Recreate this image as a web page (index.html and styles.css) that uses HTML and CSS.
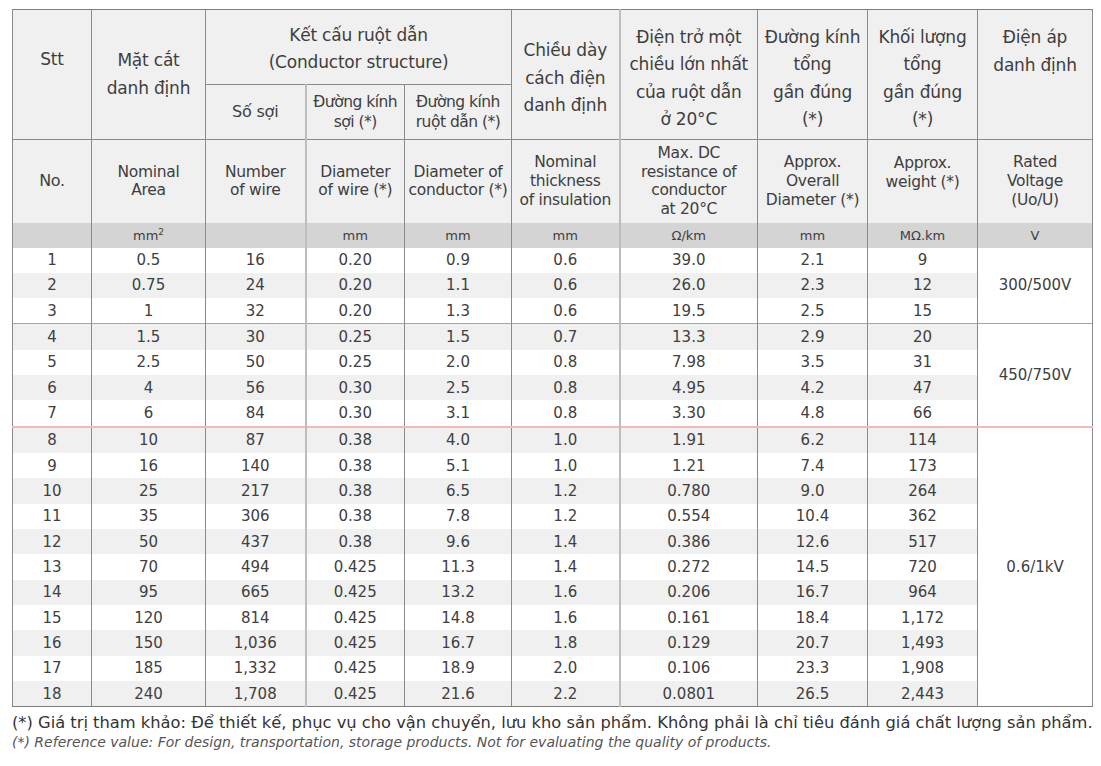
FILE: index.html
```html
<!DOCTYPE html>
<html lang="vi">
<head>
    <meta charset="UTF-8">
    <meta name="viewport" content="width=device-width, initial-scale=1.0">
    <title>Thông số kỹ thuật cáp</title>
    <link rel="stylesheet" href="styles.css">
</head>
<body>
    <table class="spec">
        <colgroup>
            <col class="c-no">
            <col class="c-area">
            <col class="c-wire">
            <col class="c-dwire">
            <col class="c-dcond">
            <col class="c-ins">
            <col class="c-res">
            <col class="c-od">
            <col class="c-wt">
            <col class="c-volt">
        </colgroup>
        <thead>
            <tr class="head-vi">
                <th rowspan="2" class="stt">Stt</th>
                <th rowspan="2">Mặt cắt<br>danh định</th>
                <th colspan="3" class="group">Kết cấu ruột dẫn<br>(Conductor structure)</th>
                <th rowspan="2" class="mid">Chiều dày<br>cách điện<br>danh định</th>
                <th rowspan="2" class="mid light-l">Điện trở một<br>chiều lớn nhất<br>của ruột dẫn<br>ở 20°C</th>
                <th rowspan="2" class="mid">Đường kính<br>tổng<br>gần đúng<br>(*)</th>
                <th rowspan="2" class="mid">Khối lượng<br>tổng<br>gần đúng<br>(*)</th>
                <th rowspan="2" class="top">Điện áp<br>danh định</th>
            </tr>
            <tr class="head-sub">
                <th class="big">Số sợi</th>
                <th class="light-l">Đường kính<br>sợi (*)</th>
                <th>Đường kính<br>ruột dẫn (*)</th>
            </tr>
            <tr class="head-en">
                <th class="big">No.</th>
                <th>Nominal<br>Area</th>
                <th>Number<br>of wire</th>
                <th class="light-l">Diameter<br>of wire (*)</th>
                <th>Diameter of<br>conductor (*)</th>
                <th>Nominal<br>thickness<br>of insulation</th>
                <th class="light-l">Max. DC<br>resistance of<br>conductor<br>at 20°C</th>
                <th>Approx.<br>Overall<br>Diameter (*)</th>
                <th class="top">Approx.<br>weight (*)</th>
                <th>Rated<br>Voltage<br>(Uo/U)</th>
            </tr>
            <tr class="units">
                <th></th>
                <th>mm<sup>2</sup></th>
                <th></th>
                <th class="light-l">mm</th>
                <th>mm</th>
                <th>mm</th>
                <th class="light-l">Ω/km</th>
                <th>mm</th>
                <th>MΩ.km</th>
                <th>V</th>
            </tr>
        </thead>
        <tbody>
            <tr><td>1</td><td>0.5</td><td>16</td><td class="light-l">0.20</td><td>0.9</td><td>0.6</td><td class="light-l">39.0</td><td>2.1</td><td>9</td><td rowspan="3" class="volt">300/500V</td></tr>
            <tr><td>2</td><td>0.75</td><td>24</td><td class="light-l">0.20</td><td>1.1</td><td>0.6</td><td class="light-l">26.0</td><td>2.3</td><td>12</td></tr>
            <tr><td>3</td><td>1</td><td>32</td><td class="light-l">0.20</td><td>1.3</td><td>0.6</td><td class="light-l">19.5</td><td>2.5</td><td>15</td></tr>
            <tr class="group-a"><td>4</td><td>1.5</td><td>30</td><td class="light-l">0.25</td><td>1.5</td><td>0.7</td><td class="light-l">13.3</td><td>2.9</td><td>20</td><td rowspan="4" class="volt">450/750V</td></tr>
            <tr><td>5</td><td>2.5</td><td>50</td><td class="light-l">0.25</td><td>2.0</td><td>0.8</td><td class="light-l">7.98</td><td>3.5</td><td>31</td></tr>
            <tr><td>6</td><td>4</td><td>56</td><td class="light-l">0.30</td><td>2.5</td><td>0.8</td><td class="light-l">4.95</td><td>4.2</td><td>47</td></tr>
            <tr><td>7</td><td>6</td><td>84</td><td class="light-l">0.30</td><td>3.1</td><td>0.8</td><td class="light-l">3.30</td><td>4.8</td><td>66</td></tr>
            <tr class="group-b"><td>8</td><td>10</td><td>87</td><td class="light-l">0.38</td><td>4.0</td><td>1.0</td><td class="light-l">1.91</td><td>6.2</td><td>114</td><td rowspan="11" class="volt">0.6/1kV</td></tr>
            <tr><td>9</td><td>16</td><td>140</td><td class="light-l">0.38</td><td>5.1</td><td>1.0</td><td class="light-l">1.21</td><td>7.4</td><td>173</td></tr>
            <tr><td>10</td><td>25</td><td>217</td><td class="light-l">0.38</td><td>6.5</td><td>1.2</td><td class="light-l">0.780</td><td>9.0</td><td>264</td></tr>
            <tr><td>11</td><td>35</td><td>306</td><td class="light-l">0.38</td><td>7.8</td><td>1.2</td><td class="light-l">0.554</td><td>10.4</td><td>362</td></tr>
            <tr><td>12</td><td>50</td><td>437</td><td class="light-l">0.38</td><td>9.6</td><td>1.4</td><td class="light-l">0.386</td><td>12.6</td><td>517</td></tr>
            <tr><td>13</td><td>70</td><td>494</td><td class="light-l">0.425</td><td>11.3</td><td>1.4</td><td class="light-l">0.272</td><td>14.5</td><td>720</td></tr>
            <tr><td>14</td><td>95</td><td>665</td><td class="light-l">0.425</td><td>13.2</td><td>1.6</td><td class="light-l">0.206</td><td>16.7</td><td>964</td></tr>
            <tr><td>15</td><td>120</td><td>814</td><td class="light-l">0.425</td><td>14.8</td><td>1.6</td><td class="light-l">0.161</td><td>18.4</td><td>1,172</td></tr>
            <tr><td>16</td><td>150</td><td>1,036</td><td class="light-l">0.425</td><td>16.7</td><td>1.8</td><td class="light-l">0.129</td><td>20.7</td><td>1,493</td></tr>
            <tr><td>17</td><td>185</td><td>1,332</td><td class="light-l">0.425</td><td>18.9</td><td>2.0</td><td class="light-l">0.106</td><td>23.3</td><td>1,908</td></tr>
            <tr><td>18</td><td>240</td><td>1,708</td><td class="light-l">0.425</td><td>21.6</td><td>2.2</td><td class="light-l">0.0801</td><td>26.5</td><td>2,443</td></tr>
        </tbody>
    </table>

    <p class="note">(*) Giá trị tham khảo: Để thiết kế, phục vụ cho vận chuyển, lưu kho sản phẩm. Không phải là chỉ tiêu đánh giá chất lượng sản phẩm.</p>
    <p class="note-en">(*) Reference value: For design, transportation, storage products. Not for evaluating the quality of products.</p>
</body>
</html>
```

FILE: styles.css
```css
body {
    margin: 9px 0 0 12px;
    font-family: 'DejaVu Sans', 'Liberation Sans', sans-serif;
    color: #404040;
    background: #fff;
}

.spec {
    border-collapse: collapse;
    table-layout: fixed;
    width: 1081px;
    border: 1px solid #7d7d7d;
}
.c-no { width: 79px; }
.c-area { width: 114px; }
.c-wire { width: 100px; }
.c-dwire { width: 99px; }
.c-dcond { width: 107px; }
.c-ins { width: 108px; }
.c-res { width: 138px; }
.c-od { width: 110px; }
.c-wt { width: 110px; }
.c-volt { width: 115px; }

.spec th,
.spec td {
    padding: 0;
    text-align: center;
    border-left: 1px solid #8a8a8a;
    border-right: 1px solid #8a8a8a;
}
.spec th {
    font-weight: normal;
    background: #f0f0f0;
    color: #3e3e3e;
}
.spec .light-l { border-left: 2px solid #bdbdbd; }

/* vietnamese header */
.head-vi { height: 75px; }
.head-vi th {
    font-size: 17px;
    line-height: 27.5px;
    border-bottom: 1px solid #8a8a8a;
    letter-spacing: -0.2px;
}
.head-vi .stt { padding-bottom: 30px; }
.head-vi .group { line-height: 27px; padding-top: 4px; }
.head-vi .mid { padding-top: 8px; }
.spec .top { vertical-align: top; }
.head-vi .top { padding-top: 14px; }

.head-sub { height: 55px; }
.head-sub th {
    font-size: 15.5px;
    line-height: 20px;
    border-bottom: 1px solid #8a8a8a;
    letter-spacing: -0.5px;
}
.head-sub .big { font-size: 16px; letter-spacing: -0.2px; }

/* english header */
.head-en { height: 83px; }
.head-en th {
    font-size: 15.5px;
    line-height: 18.7px;
    letter-spacing: -0.3px;
}
.head-en .big { font-size: 16px; }
.head-en .top { padding-top: 14px; }

.units { height: 25px; }
.units th {
    background: #d4d4d4;
    font-size: 13px;
}
.units sup {
    font-size: 9px;
    line-height: 0;
    vertical-align: 5px;
}

/* data */
.spec td {
    height: 25.33px;
    font-size: 15px;
    color: #404040;
}
.spec tbody tr:nth-child(even) td { background: #eff0ef; }
.spec tbody tr td.volt { background: #fff; }
.spec tr.group-a td { border-top: 1px solid #dc8e8e; }
.spec tr.group-b td { border-top: 2px solid #f3b9b9; }
.spec tbody tr:last-child td { border-bottom: 1px solid #7d7d7d; }

.note {
    margin: 5px 0 0;
    font-size: 16.3px;
    line-height: 21px;
    color: #333;
}
.note-en {
    margin: 0;
    font-size: 14px;
    line-height: 19px;
    font-style: italic;
    color: #555;
}
```
